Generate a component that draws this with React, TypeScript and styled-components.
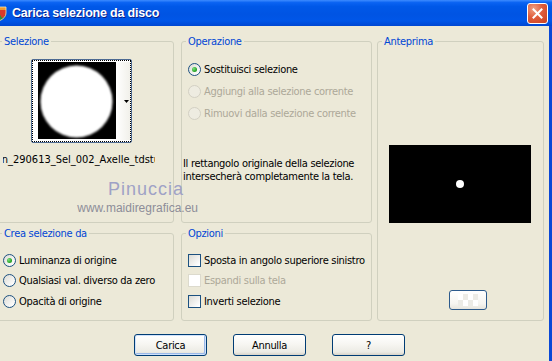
import React from "react";
import styled, { createGlobalStyle } from "styled-components";

const UI_FONT = `"DejaVu Sans Condensed", "Liberation Sans", Arial, sans-serif`;

const GlobalStyle = createGlobalStyle`
  html, body { margin: 0; padding: 0; background: #ECE9D8; }
  body { font-family: ${UI_FONT}; font-size: 11px; }
`;

const Window = styled.div`
  position: relative;
  width: 552px;
  height: 361px;
  overflow: hidden;
  display: flex;
  flex-direction: column;
  background: #ece9d8;
  font-family: ${UI_FONT};
  font-size: 11px;
  letter-spacing: -0.3px;
  color: #000;
`;

const TitleBar = styled.div`
  height: 26px;
  flex: none;
  display: flex;
  align-items: center;
  padding-right: 4px;
  letter-spacing: 0;
  background: linear-gradient(
    180deg,
    #3d8bff 0%,
    #0a63f2 10%,
    #0058e8 25%,
    #0054e3 55%,
    #0056e8 80%,
    #0047d2 100%
  );
`;

const AppIcon = styled.svg`
  flex: none;
  margin-left: -9px;
`;

const Title = styled.div`
  flex: 1;
  margin-left: 5px;
  font: bold 12.5px "Liberation Sans", Arial, sans-serif;
  letter-spacing: -0.2px;
  color: #fff;
  text-shadow: 1px 1px 0 #0a1f8a;
  white-space: nowrap;
`;

const CloseButton = styled.div`
  width: 21px;
  height: 21px;
  box-sizing: border-box;
  border: 1px solid #fff;
  border-radius: 3px;
  display: flex;
  align-items: center;
  justify-content: center;
  background: radial-gradient(circle at 30% 25%, #f0a184 0%, #e05c3b 45%, #c9401f 100%);
`;

const Frame = styled.div`
  flex: 1;
  display: flex;
  flex-direction: column;
  border-right: 3px solid #0a48d6;
`;

const Panels = styled.div`
  display: grid;
  grid-template-columns: 177px 7px 191px 5px 167px;
  grid-template-rows: 188px 94px;
  row-gap: 4px;
  grid-template-areas:
    "sel . op . prev"
    "crea . opz . prev";
  margin: 9px 0 0 -3px;
`;

const Group = styled.fieldset<{ $area: string }>`
  grid-area: ${(p) => p.$area};
  margin: 0;
  padding: 0;
  min-width: 0;
  border: 1px solid #d0d0bf;
  border-radius: 3px;
  box-sizing: border-box;
`;

const Legend = styled.legend`
  margin-left: 4px;
  padding: 0 2px;
  font: 11px/13px ${UI_FONT};
  color: #0046d5;
`;

/* Selezione */
const SelectionBody = styled.div`
  display: flex;
  flex-direction: column;
  align-items: flex-start;
  padding-top: 11px;
`;

const ComboBox = styled.div`
  margin-left: 33px;
  width: 101px;
  height: 84px;
  box-sizing: border-box;
  border: 1px solid #4d6a92;
  border-radius: 2px;
  background: #fff;
  display: flex;
`;

const FocusRect = styled.div`
  flex: 1;
  display: flex;
  box-sizing: border-box;
  border: 1px dotted #000;
  padding: 1px 0 1px 5px;
`;

const Thumb = styled.svg`
  flex: none;
  display: block;
`;

const DropStrip = styled.div`
  flex: 1;
  display: flex;
  align-items: center;
  justify-content: flex-end;
  padding-right: 1px;
  background: linear-gradient(90deg, #ffffff, #f1f0ea);
`;

const FileName = styled.div`
  margin: 10px 0 0 5px;
  width: 152px;
  overflow: hidden;
  white-space: nowrap;
  line-height: 13px;
  letter-spacing: 0;
  text-indent: -4px;
`;

/* Operazione */
const OperationBody = styled.div`
  padding-top: 10px;
`;

const OptionList = styled.div<{ $padLeft: number; $row: number }>`
  display: flex;
  flex-direction: column;
  padding-left: ${(p) => p.$padLeft}px;
  & > * {
    height: ${(p) => p.$row}px;
  }
`;

const OptionRow = styled.div<{ $disabled?: boolean }>`
  display: flex;
  align-items: center;
  gap: 3px;
  color: ${(p) => (p.$disabled ? "#aca899" : "#000")};
  white-space: nowrap;
`;

const Description = styled.div`
  margin: 33px 0 0 1px;
  line-height: 13px;
`;

const Radio = styled.span<{ $checked?: boolean; $disabled?: boolean }>`
  flex: none;
  width: 13px;
  height: 13px;
  box-sizing: border-box;
  border-radius: 50%;
  border: 1px solid ${(p) => (p.$disabled ? "#d3d0c3" : "#1c5180")};
  background: ${(p) =>
    p.$disabled ? "#eeece1" : "linear-gradient(135deg, #dcdbd5 0%, #ffffff 90%)"};
  display: flex;
  align-items: center;
  justify-content: center;
  &::after {
    content: "";
    display: ${(p) => (p.$checked ? "block" : "none")};
    width: 5px;
    height: 5px;
    border-radius: 50%;
    background: radial-gradient(circle at 35% 35%, #7ee07e 0%, #2aa82a 60%, #1a8a1a 100%);
  }
`;

const Check = styled.span<{ $disabled?: boolean }>`
  flex: none;
  width: 13px;
  height: 13px;
  box-sizing: border-box;
  border: 1px solid ${(p) => (p.$disabled ? "#dcdacd" : "#1c5180")};
  background: ${(p) =>
    p.$disabled ? "#ffffff" : "linear-gradient(135deg, #dcdbd5 0%, #ffffff 90%)"};
`;

const SmallBody = styled.div`
  padding-top: 10px;
`;

/* Anteprima */
const PreviewBody = styled.div`
  display: flex;
  flex-direction: column;
  align-items: flex-start;
  padding: 97px 0 0 11px;
`;

const PreviewCanvas = styled.svg`
  display: block;
`;

const ZoomButton = styled.div`
  margin: 67px 0 0 60px;
  width: 38px;
  height: 20px;
  box-sizing: border-box;
  border: 1px solid #2c5a8c;
  border-radius: 3px;
  display: flex;
  align-items: center;
  justify-content: center;
  background: linear-gradient(180deg, #ffffff 0%, #f6f5f1 70%, #e6e4dc 100%);
`;

const Checker = styled.span`
  width: 20px;
  height: 12px;
  background-image: repeating-conic-gradient(#ecebe6 0 25%, #ffffff 0 50%);
  background-size: 10px 12px;
`;

/* Buttons */
const ButtonRow = styled.div`
  display: flex;
  gap: 26px;
  padding-left: 134px;
  margin-top: 13px;
`;

const PushButton = styled.button<{ $default?: boolean }>`
  width: 73px;
  height: 22px;
  box-sizing: border-box;
  padding: 0;
  border: 1px solid #003c74;
  border-radius: 3px;
  font: 11px ${UI_FONT};
  letter-spacing: -0.3px;
  color: #000;
  background: linear-gradient(180deg, #ffffff 0%, #f7f6f2 45%, #ecebe4 85%, #d8d3c8 100%);
  box-shadow: ${(p) =>
    p.$default ? "inset 0 0 0 1px #cfe1fb, inset -1px -1px 0 1px #9bb9e8" : "none"};
`;

const Watermark = styled.div`
  position: absolute;
  left: 77px;
  top: 180px;
  display: flex;
  flex-direction: column;
  align-items: flex-end;
  width: 121px;
  pointer-events: none;
  letter-spacing: 0;
`;

const WatermarkName = styled.div`
  margin-right: 14px;
  font: 18px/18px "Liberation Sans", Arial, sans-serif;
  letter-spacing: 1px;
  color: #9fa2c6;
`;

const WatermarkUrl = styled.div`
  margin-top: 4px;
  font: 12px/12px "Liberation Sans", Arial, sans-serif;
  color: #8d8d98;
  white-space: nowrap;
`;

export default function App() {
  return (
    <>
      <GlobalStyle />
      <Window>
        <TitleBar>
          <AppIcon width="16" height="16" viewBox="0 0 16 16">
            <path d="M1 2 H15 V8 Q15 13 8 16 Q1 13 1 8 Z" fill="#2f8f3a" />
            <path d="M1 2 H15 V5 H1 Z" fill="#f29a2e" />
            <path d="M8 5 H15 V8 Q15 11 11 13 L8 8 Z" fill="#d93a2b" />
            <path d="M1 2 H15 V8 Q15 13 8 16 Q1 13 1 8 Z" fill="none" stroke="#f5e6b0" strokeWidth="0.8" />
          </AppIcon>
          <Title>Carica selezione da disco</Title>
          <CloseButton>
            <svg width="11" height="11" viewBox="0 0 11 11">
              <path d="M1.5 1.5 L9.5 9.5 M9.5 1.5 L1.5 9.5" stroke="#fff" strokeWidth="2" strokeLinecap="square" />
            </svg>
          </CloseButton>
        </TitleBar>
        <Frame>
          <Panels>
            <Group $area="sel">
              <Legend>Selezione</Legend>
              <SelectionBody>
                <ComboBox>
                  <FocusRect>
                    <Thumb width="78" height="77" viewBox="0 0 78 77">
                      <defs>
                        <filter id="soft" x="-10%" y="-10%" width="120%" height="120%">
                          <feGaussianBlur stdDeviation="1.3" />
                        </filter>
                      </defs>
                      <rect width="78" height="77" fill="#000" />
                      <circle cx="38.5" cy="39.5" r="36" fill="#fff" filter="url(#soft)" />
                    </Thumb>
                    <DropStrip>
                      <svg width="5" height="3" viewBox="0 0 5 3">
                        <path d="M0 0 H5 L2.5 3 Z" fill="#000" />
                      </svg>
                    </DropStrip>
                  </FocusRect>
                </ComboBox>
                <FileName>in_290613_Sel_002_Axelle_tdstudio</FileName>
              </SelectionBody>
            </Group>

            <Group $area="op">
              <Legend>Operazione</Legend>
              <OperationBody>
                <OptionList $padLeft={6} $row={22}>
                  <OptionRow>
                    <Radio $checked />
                    Sostituisci selezione
                  </OptionRow>
                  <OptionRow $disabled>
                    <Radio $disabled />
                    Aggiungi alla selezione corrente
                  </OptionRow>
                  <OptionRow $disabled>
                    <Radio $disabled />
                    Rimuovi dalla selezione corrente
                  </OptionRow>
                </OptionList>
                <Description>
                  Il rettangolo originale della selezione
                  <br />
                  intersecherà completamente la tela.
                </Description>
              </OperationBody>
            </Group>

            <Group $area="prev">
              <Legend>Anteprima</Legend>
              <PreviewBody>
                <PreviewCanvas width="142" height="78" viewBox="0 0 142 78">
                  <rect width="142" height="78" fill="#000" />
                  <circle cx="71" cy="39" r="4" fill="#fff" />
                </PreviewCanvas>
                <ZoomButton>
                  <Checker />
                </ZoomButton>
              </PreviewBody>
            </Group>

            <Group $area="crea">
              <Legend>Crea selezione da</Legend>
              <SmallBody>
                <OptionList $padLeft={5} $row={20.5}>
                  <OptionRow>
                    <Radio $checked />
                    Luminanza di origine
                  </OptionRow>
                  <OptionRow>
                    <Radio />
                    Qualsiasi val. diverso da zero
                  </OptionRow>
                  <OptionRow>
                    <Radio />
                    Opacità di origine
                  </OptionRow>
                </OptionList>
              </SmallBody>
            </Group>

            <Group $area="opz">
              <Legend>Opzioni</Legend>
              <SmallBody>
                <OptionList $padLeft={6} $row={20.5}>
                  <OptionRow>
                    <Check />
                    Sposta in angolo superiore sinistro
                  </OptionRow>
                  <OptionRow $disabled>
                    <Check $disabled />
                    Espandi sulla tela
                  </OptionRow>
                  <OptionRow>
                    <Check />
                    Inverti selezione
                  </OptionRow>
                </OptionList>
              </SmallBody>
            </Group>
          </Panels>

          <ButtonRow>
            <PushButton $default>Carica</PushButton>
            <PushButton>Annulla</PushButton>
            <PushButton>?</PushButton>
          </ButtonRow>
        </Frame>
        <Watermark>
          <WatermarkName>Pinuccia</WatermarkName>
          <WatermarkUrl>www.maidiregrafica.eu</WatermarkUrl>
        </Watermark>
      </Window>
    </>
  );
}
